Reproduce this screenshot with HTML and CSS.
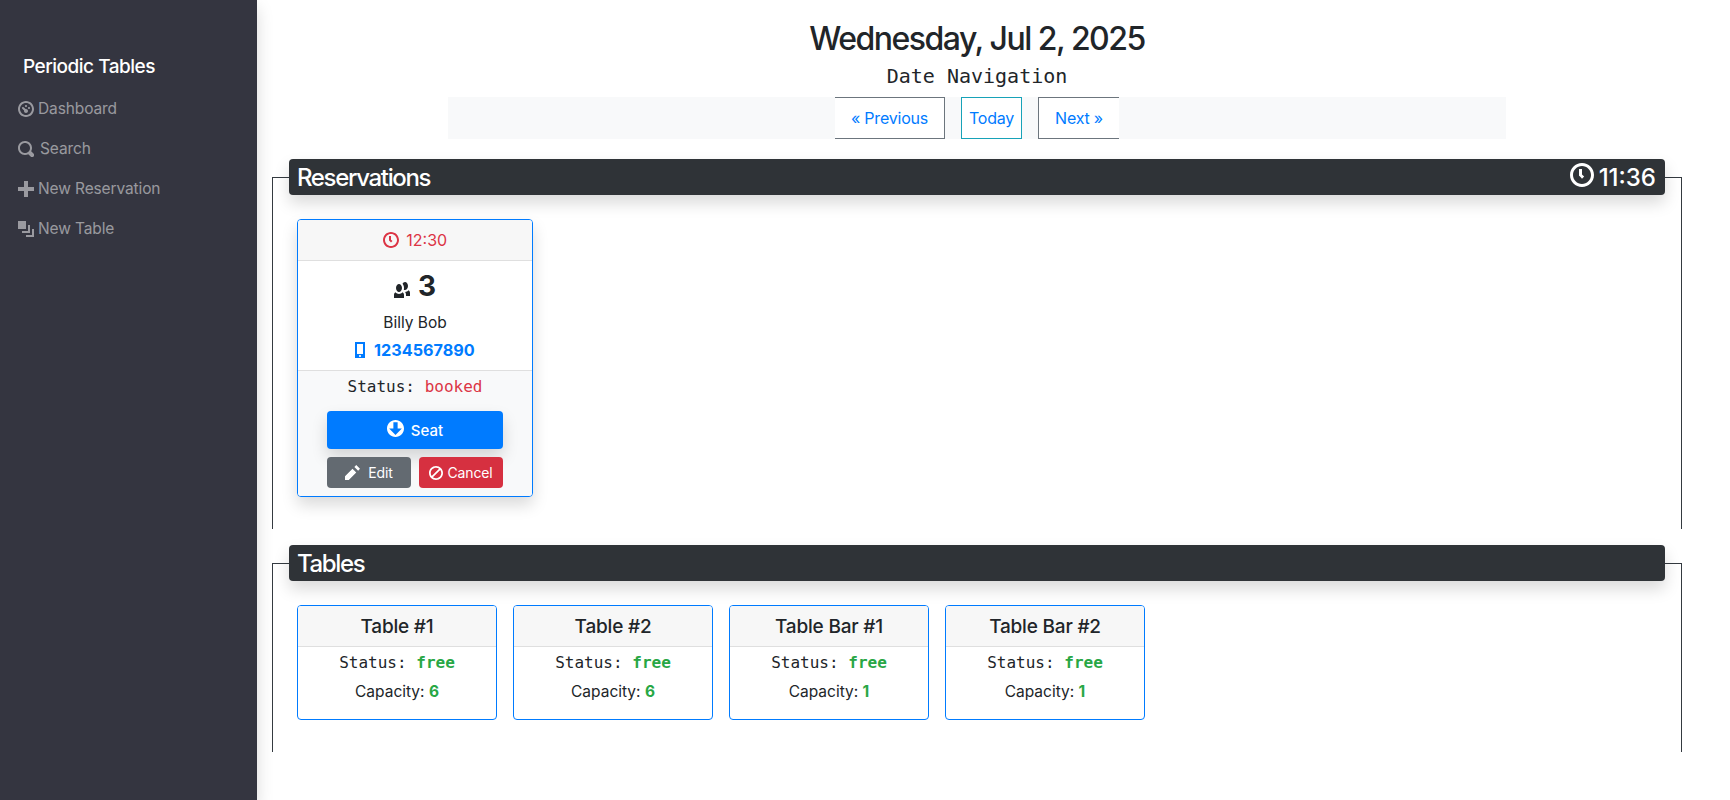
FILE: index.html
```html
<!DOCTYPE html>
<html lang="en">
<head>
    <meta charset="UTF-8">
    <meta name="viewport" content="width=device-width, initial-scale=1.0">
    <title>Periodic Tables - Dashboard</title>
    <link rel="stylesheet" href="styles.css">
</head>
<body>
    <svg class="sprite" xmlns="http://www.w3.org/2000/svg">
        <symbol id="i-dashboard" viewBox="0 0 8 8"><path d="M4 0c-2.2 0-4 1.8-4 4s1.8 4 4 4 4-1.8 4-4-1.8-4-4-4zm0 1c1.66 0 3 1.34 3 3s-1.34 3-3 3-3-1.34-3-3 1.34-3 3-3zm0 1c-.28 0-.5.22-.5.5s.22.5.5.5.5-.22.5-.5-.22-.5-.5-.5zm-1.66 1a.5.5 0 0 0-.19.84l.91.91c-.02.08-.06.16-.06.25 0 .55.45 1 1 1s1-.45 1-1-.45-1-1-1c-.09 0-.17.04-.25.06l-.91-.91a.5.5 0 0 0-.44-.16.5.5 0 0 0-.06 0zm3.16 0c-.28 0-.5.22-.5.5s.22.5.5.5.5-.22.5-.5-.22-.5-.5-.5z"/></symbol>
        <symbol id="i-search" viewBox="0 0 8 8"><path d="M3.5 0c-1.93 0-3.5 1.57-3.5 3.5s1.57 3.5 3.5 3.5c.59 0 1.17-.14 1.66-.41a1 1 0 0 0 .13.13l1 1a1.02 1.02 0 1 0 1.44-1.44l-1-1a1 1 0 0 0-.16-.13c.27-.49.44-1.06.44-1.66 0-1.93-1.57-3.5-3.5-3.5zm0 1c1.39 0 2.5 1.11 2.5 2.5 0 .66-.24 1.27-.66 1.72-.01.01-.02.02-.03.03a1 1 0 0 0-.13.13c-.44.4-1.04.63-1.69.63-1.39 0-2.5-1.11-2.5-2.5s1.11-2.5 2.5-2.5z"/></symbol>
        <symbol id="i-plus" viewBox="0 0 8 8"><path d="M3 0v3h-3v2h3v3h2v-3h3v-2h-3v-3h-2z"/></symbol>
        <symbol id="i-layers" viewBox="0 0 8 8"><path d="M0 0v4h4v-4h-4zm5 2v3h-3v1h4v-4h-1zm2 2v3h-3v1h4v-4h-1z"/></symbol>
        <symbol id="i-clock" viewBox="0 0 8 8"><path d="M4 0c-2.2 0-4 1.8-4 4s1.8 4 4 4 4-1.8 4-4-1.8-4-4-4zm0 1c1.66 0 3 1.34 3 3s-1.34 3-3 3-3-1.34-3-3 1.34-3 3-3zm-1 1v2.22l.16.13.5.5.34.38.72-.72-.38-.34-.34-.34v-1.81h-1z"/></symbol>
        <symbol id="i-people" viewBox="0 0 8 8"><path d="M5.5 0c-.51 0-.95.35-1.22.88.45.54.72 1.28.72 2.13 0 .29-.03.55-.09.81.19.11.38.19.59.19.83 0 1.5-.9 1.5-2s-.67-2-1.5-2zm-3 1c-.83 0-1.5.9-1.5 2s.67 2 1.5 2 1.5-.9 1.5-2-.67-2-1.5-2zm4.75 3.16c-.43.51-1.02.82-1.69.84.27.38.44.84.44 1.34v.66h2v-1.66c0-.52-.31-.97-.75-1.19zm-6.5 1c-.44.22-.75.67-.75 1.19v1.66h5v-1.66c0-.52-.31-.97-.75-1.19-.45.53-1.06.84-1.75.84s-1.3-.32-1.75-.84z"/></symbol>
        <symbol id="i-phone" viewBox="0 0 5 8"><path d="M.19 0c-.11 0-.19.08-.19.19v7.63c0 .11.08.19.19.19h4.63c.11 0 .19-.08.19-.19v-7.63c0-.11-.08-.19-.19-.19h-4.63zm.81 1h3v5h-3v-5zm1.5 5.5c.28 0 .5.22.5.5s-.22.5-.5.5-.5-.22-.5-.5.22-.5.5-.5z"/></symbol>
        <symbol id="i-seat" viewBox="0 0 8 8"><path d="M4 0c-2.2 0-4 1.8-4 4s1.8 4 4 4 4-1.8 4-4-1.8-4-4-4zm-1 1h2v3h2l-3 3-3-3h2v-3z"/></symbol>
        <symbol id="i-pencil" viewBox="0 0 8 8"><path d="M6 0l-1 1 2 2 1-1-2-2zm-2 2l-4 4v2h2l4-4-2-2z"/></symbol>
        <symbol id="i-ban" viewBox="0 0 8 8"><path d="M4 0c-2.2 0-4 1.8-4 4s1.8 4 4 4 4-1.8 4-4-1.8-4-4-4zm0 1c.66 0 1.26.21 1.75.56l-4.19 4.19c-.35-.49-.56-1.09-.56-1.75 0-1.66 1.34-3 3-3zm2.44 1.25c.35.49.56 1.09.56 1.75 0 1.66-1.34 3-3 3-.66 0-1.26-.21-1.75-.56l4.19-4.19z"/></symbol>
    </svg>

    <nav class="sidebar">
        <div class="brand">Periodic Tables</div>
        <a class="side-link" href="#"><svg class="icon"><use href="#i-dashboard"/></svg> Dashboard</a>
        <a class="side-link" href="#"><svg class="icon"><use href="#i-search"/></svg> <span class="search-label">Search</span></a>
        <a class="side-link" href="#"><svg class="icon"><use href="#i-plus"/></svg> New Reservation</a>
        <a class="side-link" href="#"><svg class="icon"><use href="#i-layers"/></svg> New Table</a>
    </nav>

    <main class="main">
        <h1 class="date-title">Wednesday, Jul 2, 2025</h1>
        <div class="date-sub">Date Navigation</div>
        <div class="date-nav">
            <a class="nav-btn nav-prev" href="#">&laquo; Previous</a>
            <a class="nav-btn nav-today" href="#">Today</a>
            <a class="nav-btn nav-next" href="#">Next &raquo;</a>
        </div>

        <section class="panel panel-reservations">
            <div class="panel-head">
                <span>Reservations</span>
                <span class="clock"><svg class="icon clock-icon"><use href="#i-clock"/></svg> 11:36</span>
            </div>
            <div class="card-row">
                <div class="card res-card">
                    <div class="card-top res-time"><svg class="icon time-icon"><use href="#i-clock"/></svg> 12:30</div>
                    <div class="res-body">
                        <div class="res-party"><svg class="icon people-icon"><use href="#i-people"/></svg> <b>3</b></div>
                        <div class="res-name">Billy Bob</div>
                        <div class="res-phone"><svg class="icon phone-icon"><use href="#i-phone"/></svg> 1234567890</div>
                    </div>
                    <div class="res-foot">
                        <div class="mono">Status: <span class="booked">booked</span></div>
                        <a class="btn btn-seat" href="#"><svg class="icon seat-icon"><use href="#i-seat"/></svg> Seat</a>
                        <div class="btn-pair">
                            <a class="btn btn-small btn-edit" href="#"><svg class="icon pencil-icon"><use href="#i-pencil"/></svg> Edit</a>
                            <a class="btn btn-small btn-cancel" href="#"><svg class="icon ban-icon"><use href="#i-ban"/></svg> Cancel</a>
                        </div>
                    </div>
                </div>
            </div>
        </section>

        <section class="panel panel-tables">
            <div class="panel-head"><span>Tables</span></div>
            <div class="card-row">
                <div class="card table-card">
                    <div class="card-top table-name">Table #1</div>
                    <div class="table-body">
                        <div class="mono">Status: <b class="free">free</b></div>
                        <div class="capacity">Capacity: <b class="free">6</b></div>
                    </div>
                </div>
                <div class="card table-card">
                    <div class="card-top table-name">Table #2</div>
                    <div class="table-body">
                        <div class="mono">Status: <b class="free">free</b></div>
                        <div class="capacity">Capacity: <b class="free">6</b></div>
                    </div>
                </div>
                <div class="card table-card">
                    <div class="card-top table-name">Table Bar #1</div>
                    <div class="table-body">
                        <div class="mono">Status: <b class="free">free</b></div>
                        <div class="capacity">Capacity: <b class="free">1</b></div>
                    </div>
                </div>
                <div class="card table-card">
                    <div class="card-top table-name">Table Bar #2</div>
                    <div class="table-body">
                        <div class="mono">Status: <b class="free">free</b></div>
                        <div class="capacity">Capacity: <b class="free">1</b></div>
                    </div>
                </div>
            </div>
        </section>
    </main>
</body>
</html>
```

FILE: styles.css
```css
* {
    box-sizing: border-box;
}

body {
    font-family: Inter, "Liberation Sans", sans-serif;
    font-size: 16px;
    line-height: 24px;
    color: #212529;
    margin: 0;
    display: flex;
    height: 100vh;
    overflow: hidden;
    background-color: #fff;
}

a {
    text-decoration: none;
}

.sprite {
    display: none;
}

.icon {
    fill: currentColor;
    display: inline-block;
    width: 16px;
    height: 16px;
}

.sidebar {
    width: 257px;
    flex-shrink: 0;
    background-color: #343540;
    padding-top: 55px;
    box-shadow: 0 8px 16px rgba(0, 0, 0, 0.15);
}

.brand {
    color: #fff;
    font-size: 19px;
    font-weight: 500;
    line-height: 24px;
    margin: 0 0 10px 23px;
    letter-spacing: -0.5px;
}

.side-link {
    display: flex;
    align-items: center;
    gap: 4px;
    height: 40px;
    padding-left: 18px;
    color: rgba(255, 255, 255, 0.5);
    font-size: 15.5px;
    letter-spacing: -0.12px;
}

.search-label {
    margin-left: 2px;
}

.main {
    width: 1440px;
    padding: 19px 15px 0;
    text-align: center;
}

.date-title {
    font-size: 32px;
    font-weight: 500;
    line-height: 40px;
    margin: 0;
    letter-spacing: -1.5px;
}

.date-sub {
    font-family: "DejaVu Sans Mono", monospace;
    font-size: 20px;
    line-height: 24px;
    margin: 5px 0 9px;
}

.date-nav {
    display: flex;
    justify-content: center;
    gap: 16px;
    height: 42px;
    width: 1058px;
    margin: 0 auto 38px;
    background-color: #f8f9fa;
}

.nav-btn {
    display: flex;
    align-items: center;
    justify-content: center;
    color: #007bff;
    background-color: #fff;
    border: 1px solid #6c757d;
    font-size: 16px;
    letter-spacing: -0.2px;
}

.nav-prev {
    width: 110px;
    border-left: 0;
}

.nav-today {
    width: 61px;
    border-color: #17a2b8;
}

.nav-next {
    width: 81px;
    border-right: 0;
}

.panel {
    border: 1px solid #343a40;
    border-bottom: 0;
}

.panel-reservations {
    height: 352px;
}

.panel-tables {
    height: 189px;
    margin-top: 34px;
}

.panel-head {
    display: flex;
    justify-content: space-between;
    align-items: center;
    height: 36px;
    margin: -19px 16px 0;
    padding: 1px 9px 0 8px;
    border-radius: 4px;
    background-color: #2f3337;
    color: #fff;
    font-size: 24px;
    font-weight: 500;
    letter-spacing: -1.35px;
    box-shadow: 0 8px 16px rgba(0, 0, 0, 0.15);
}

.clock {
    display: flex;
    align-items: center;
    gap: 5px;
    letter-spacing: 0;
}

.clock-icon {
    width: 24px;
    height: 24px;
    margin-top: -5px;
}

.card-row {
    display: flex;
    align-items: flex-start;
    gap: 16px;
    margin: 24px 0 0 24px;
}

.card {
    border: 1px solid #007bff;
    border-radius: 4px;
    overflow: hidden;
    background-color: #fff;
}

.card-top {
    background-color: #f7f7f7;
    border-bottom: 1px solid #dfdfdf;
    text-align: center;
}

.res-card {
    width: 236px;
    height: 278px;
    box-shadow: 0 8px 16px rgba(0, 0, 0, 0.15);
}

.res-time {
    height: 41px;
    line-height: 40px;
    color: #dc3545;
    font-size: 16px;
}

.time-icon {
    width: 16px;
    height: 16px;
    vertical-align: -2px;
    margin-right: 3px;
}

.res-body {
    height: 110px;
    border-bottom: 1px solid #dfdfdf;
    text-align: center;
    padding-top: 7px;
}

.res-party {
    height: 36px;
    line-height: 36px;
    font-size: 28px;
}

.people-icon {
    width: 16px;
    height: 16px;
    vertical-align: -2px;
}

.res-name {
    margin-top: 7px;
    font-size: 15.5px;
}

.res-phone {
    margin-top: 3px;
    color: #007bff;
    font-weight: 700;
    font-size: 16.2px;
}

.phone-icon {
    width: 10px;
    height: 16px;
    vertical-align: -2px;
    margin-right: 5px;
}

.res-foot {
    height: 126px;
    background-color: #f8f9fa;
    padding: 4px 29px 0;
    text-align: center;
}

.mono {
    font-family: "DejaVu Sans Mono", monospace;
    font-size: 16px;
    line-height: 24px;
}

.booked {
    color: #dc3545;
}

.free {
    color: #28a745;
}

.btn {
    display: flex;
    align-items: center;
    justify-content: center;
    color: #fff;
    border-radius: 4px;
}

.btn-seat {
    height: 38px;
    margin-top: 12px;
    padding-top: 1px;
    gap: 7px;
    background-color: #007bff;
    font-size: 15px;
    font-weight: 500;
    box-shadow: 0 8px 16px rgba(0, 0, 0, 0.15);
}

.seat-icon {
    width: 17px;
    height: 17px;
    margin-top: -4px;
}

.btn-pair {
    display: flex;
    gap: 8px;
    margin-top: 8px;
}

.btn-small {
    width: 84px;
    height: 31px;
    font-size: 14px;
    gap: 4px;
    letter-spacing: -0.15px;
}

.pencil-icon {
    width: 15px;
    height: 15px;
}

.ban-icon {
    width: 14px;
    height: 14px;
}

.btn-edit {
    background-color: #636a71;
    gap: 8px;
}

.btn-cancel {
    background-color: #d63040;
}

.table-card {
    width: 200px;
    height: 115px;
}

.table-name {
    height: 41px;
    line-height: 41px;
    font-size: 19px;
    font-weight: 500;
    letter-spacing: -0.2px;
}

.table-body {
    text-align: center;
    padding-top: 4px;
}

.capacity {
    margin-top: 5px;
    font-size: 15.5px;
}
```
